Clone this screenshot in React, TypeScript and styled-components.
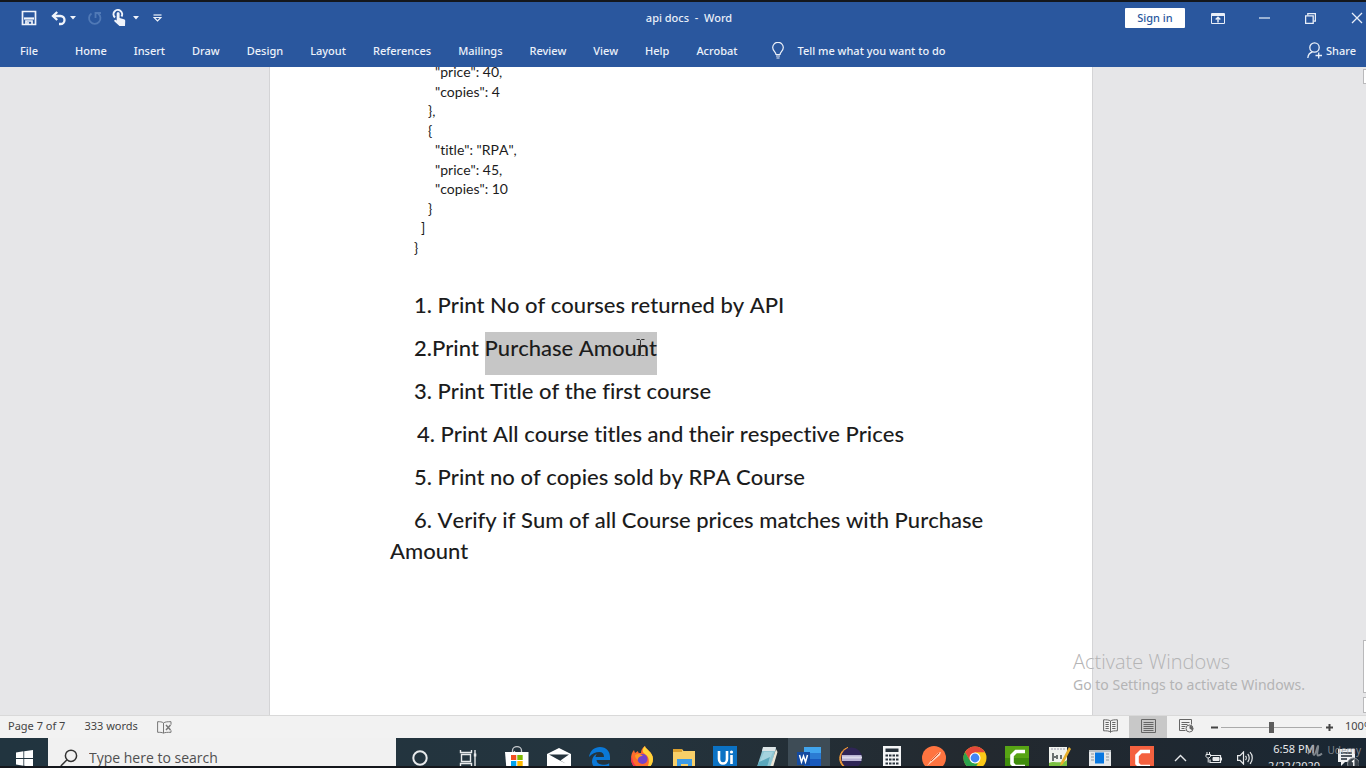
import React from "react";
import styled, { createGlobalStyle } from "styled-components";

const BLUE = "#2a579e";

const GlobalStyle = createGlobalStyle`
  * { box-sizing: border-box; }
  body { margin: 0; background: #14171c; font-family: "Noto Sans", "Open Sans", sans-serif; }
  button, input { font: inherit; }
  svg { display: block; flex: none; }
`;

const Screen = styled.div`
  display: flex;
  flex-direction: column;
  height: 100vh;
  overflow: hidden;
  padding: 2px 0;
  position: relative;
`;

const TitleBar = styled.header`
  display: grid;
  grid-template-columns: 1fr auto 1fr;
  align-items: center;
  height: 32px;
  flex: none;
  padding-left: 12px;
  background: ${BLUE};
  color: #e8eef8;
`;

const QuickAccess = styled.div`
  display: flex;
  align-items: center;
  padding-left: 4px;
`;

const ToolButton = styled.button<{ $w: number; $gap?: number; $dim?: boolean }>`
  display: flex;
  align-items: center;
  justify-content: center;
  width: ${(p) => p.$w}px;
  height: 24px;
  margin-left: ${(p) => p.$gap ?? 0}px;
  padding: 0;
  border: 0;
  background: none;
  color: ${(p) => (p.$dim ? "#5079b6" : "#f0f4fb")};
`;

const DocTitle = styled.h1`
  margin: 0;
  font-size: 11px;
  font-weight: 500;
  line-height: 16px;
  white-space: pre;
`;

const WindowControls = styled.div`
  display: flex;
  align-items: center;
  justify-content: flex-end;
`;

const SignIn = styled.button`
  width: 60px;
  height: 20px;
  margin-right: 10px;
  padding: 0;
  border: 0;
  border-radius: 1px;
  background: #fff;
  color: ${BLUE};
  font-size: 11px;
  font-weight: 500;
  line-height: 18px;
`;

const ControlButton = styled.button<{ $edge?: boolean }>`
  display: flex;
  align-items: center;
  justify-content: ${(p) => (p.$edge ? "flex-end" : "center")};
  width: ${(p) => (p.$edge ? 33 : 46)}px;
  height: 30px;
  padding: 0 ${(p) => (p.$edge ? 3 : 0)}px 0 0;
  border: 0;
  background: none;
  color: #e8eef8;
`;

const Ribbon = styled.nav`
  display: flex;
  align-items: center;
  height: 33px;
  flex: none;
  padding: 0 10px 0 6px;
  background: ${BLUE};
  color: #edf2fa;
  font-size: 11px;
`;

const Tab = styled.button<{ $file?: boolean }>`
  padding: 0 ${(p) => (p.$file ? 23 : 13)}px 0 14px;
  border: 0;
  background: none;
  color: inherit;
  line-height: 20px;
  font-weight: 500;
`;

const TellMe = styled.button`
  display: flex;
  align-items: center;
  gap: 13px;
  margin-left: 8px;
  padding: 0 14px;
  border: 0;
  background: none;
  color: inherit;
  font-weight: 500;
  line-height: 20px;
`;

const Share = styled(TellMe)`
  margin-left: auto;
  gap: 4px;
  padding: 0;
`;

const Workspace = styled.main`
  display: grid;
  grid-template-columns: 1fr 4px;
  flex: 1;
  min-height: 0;
  overflow: hidden;
  background: #e6e6e8;
`;

const Page = styled.article`
  width: 100%;
  max-width: 824px;
  margin: 0 auto;
  padding: 0 90px 0 120px;
  overflow: hidden;
  border: solid #d4d4d6;
  border-width: 0 1px;
  background: #fff;
  color: #1c1c1c;
  font-family: Lato, "Open Sans", sans-serif;
  font-variant-ligatures: none;
  font-kerning: none;
`;

const ScrollTrack = styled.div`
  display: flex;
  flex-direction: column;
  gap: 4px;
  padding: 2px 0 2px 1px;
`;

const ScrollPart = styled.span<{ $h: number; $push?: boolean }>`
  height: ${(p) => p.$h}px;
  margin-top: ${(p) => (p.$push ? "auto" : 0)};
  border: 1px solid #b9b9bb;
  border-right: 0;
  background: #fff;
`;

const Code = styled.div`
  margin: -5px 0 32px 24px;
  font-size: 14px;
`;

const CodeLine = styled.div<{ $level: number }>`
  padding-left: ${(p) => p.$level * 7}px;
  line-height: 20px;
  white-space: pre;
  &:nth-child(even) { line-height: 19px; }
`;

const Task = styled.p<{ $indent?: number }>`
  margin: 0;
  padding-bottom: 12px;
  font-size: 22px;
  font-weight: 500;
  line-height: 31px;
  text-indent: ${(p) => p.$indent ?? 24}px;
`;

const Selected = styled.mark`
  display: inline-block;
  position: relative;
  margin-bottom: -12px;
  padding-bottom: 12px;
  background: #c6c6c6;
  color: inherit;
  text-indent: 0;
`;

const TextCursor = styled.svg`
  position: absolute;
  right: 12px;
  top: 7px;
`;

const StatusBar = styled.footer`
  display: flex;
  align-items: center;
  flex: none;
  height: 23px;
  padding-left: 8px;
  overflow: hidden;
  border-top: 1px solid #d9d9d9;
  background: #f2f2f2;
  color: #444;
  font-size: 11px;
  line-height: 20px;
`;

const StatusText = styled.span`
  margin-right: 19px;
  padding-bottom: 2px;
  white-space: nowrap;
`;

const Views = styled.div`
  display: flex;
  align-items: center;
  align-self: stretch;
  margin-left: auto;
`;

const ViewButton = styled.button<{ $on?: boolean; $last?: boolean }>`
  display: flex;
  align-items: center;
  justify-content: center;
  align-self: stretch;
  width: 38px;
  margin-right: ${(p) => (p.$last ? 3 : 0)}px;
  padding: 0 0 2px;
  border: 0;
  background: ${(p) => (p.$on ? "#c8c8c8" : "none")};
  color: #666;
`;

const ZoomStep = styled.button`
  display: flex;
  align-items: center;
  justify-content: center;
  width: 12px;
  height: 20px;
  padding: 0;
  border: 0;
  background: none;
  color: #444;
`;

const ZoomRange = styled.input`
  width: 101px;
  height: 14px;
  margin: 0 1px;
  appearance: none;
  background: linear-gradient(#aaa, #aaa) center / 100% 1px no-repeat;
  &::-webkit-slider-thumb {
    appearance: none;
    width: 5px;
    height: 11px;
    background: #5c5c5c;
  }
`;

const ZoomValue = styled.span`
  width: 21px;
  margin-left: 10px;
  padding-bottom: 2px;
  overflow: hidden;
  white-space: nowrap;
`;

const TaskbarClip = styled.div`
  flex: none;
  height: 28px;
  overflow: hidden;
  background: linear-gradient(90deg, #21343f 0%, #24343e 45%, #23292f 72%, #1a2733 100%);
`;

const Taskbar = styled.div`
  display: flex;
  height: 40px;
`;

const TaskButton = styled.button<{ $active?: boolean; $grow?: boolean }>`
  display: flex;
  align-items: center;
  justify-content: center;
  flex: ${(p) => (p.$grow ? "1 1 0" : "0 0 48px")};
  min-width: 0;
  height: 40px;
  padding: 0;
  border: 0;
  background: ${(p) => (p.$active ? "#3e4c56" : "none")};
  color: #e8eaec;
`;

const Search = styled.label`
  display: flex;
  align-items: center;
  gap: 11px;
  width: 348px;
  padding-left: 12px;
  background: #f1f1f1;
  color: #444;
`;

const SearchInput = styled.input`
  flex: 1;
  min-width: 0;
  padding: 0;
  border: 0;
  outline: 0;
  background: none;
  font-family: "Open Sans", "Noto Sans", sans-serif;
  font-size: 14px;
  line-height: 20px;
  &::placeholder { color: #505050; opacity: 1; }
`;

const Apps = styled.div`
  display: flex;
  flex: 1;
  margin-left: 4px;
`;

const Tray = styled.div`
  display: flex;
  width: 203px;
  color: #e8eaec;
`;

const TrayButton = styled.button<{ $w: number }>`
  display: flex;
  align-items: center;
  justify-content: center;
  width: ${(p) => p.$w}px;
  height: 40px;
  padding: 0;
  border: 0;
  background: none;
  color: inherit;
`;

const Clock = styled.time`
  width: 66px;
  padding-top: 2px;
  text-align: center;
  font-size: 11px;
  line-height: 17px;
  white-space: nowrap;
`;

const Activation = styled.aside`
  position: absolute;
  right: 57px;
  bottom: 73px;
  width: 236px;
  color: #b4b4b5;
  font-size: 14px;
  line-height: 20px;
  white-space: nowrap;
  pointer-events: none;
`;

const ActivationTitle = styled.strong`
  display: block;
  font-family: "Open Sans", "Noto Sans", sans-serif;
  font-size: 20px;
  font-weight: 300;
  line-height: 26px;
`;

const Watermark = styled.div`
  position: absolute;
  right: 5px;
  bottom: 10px;
  display: flex;
  align-items: center;
  gap: 4px;
  color: #9a9fa4;
  font-size: 10px;
  line-height: 16px;
  opacity: 0.8;
  pointer-events: none;
`;

const Caret = () => (
  <svg width="6" height="4" viewBox="0 0 6 4"><path d="M0 0h6L3 3.5z" fill="currentColor" /></svg>
);

const SaveIcon = () => (
  <svg width="16" height="16" viewBox="0 0 16 16" fill="none" stroke="currentColor" strokeWidth="1.7">
    <path d="M1.500 1.500h13v13h-13z" /><path d="M3 8.500h10" strokeWidth="2.200" /><path d="M5 14v-3h6v3" /><path d="M7 12v3" />
  </svg>
);
const UndoIcon = () => (
  <svg width="16" height="15" viewBox="0 0 16 15" fill="none" stroke="currentColor" strokeWidth="2.300">
    <path d="M2 5h7.500a4 4 0 0 1 0 8H8" /><path d="M6.200 1 2 5l4.200 4" />
  </svg>
);
const RedoIcon = () => (
  <svg width="15" height="15" viewBox="0 0 15 15" fill="none" stroke="currentColor" strokeWidth="1.800">
    <path d="M4.500 2.500a5.700 5.700 0 1 0 6.500 0" /><path d="M8.500 7V2H14" />
  </svg>
);
const TouchIcon = () => (
  <svg width="16" height="18" viewBox="0 0 16 18">
    <path d="M3 8.500A4.300 4.300 0 1 1 9.500 7.500" fill="none" stroke="currentColor" strokeWidth="2" />
    <path d="M4.700 4.500c0-1.700 2.900-1.700 2.900 0V9l4.300 1.200c1 .3 1.500 1 1.300 2L13 17H7.500L2.500 12.500c-.8-1 .3-2 1.300-1.500l.9.500z" fill="currentColor" />
  </svg>
);
const CustomizeIcon = () => (
  <svg width="9" height="8" viewBox="0 0 9 8" fill="none" stroke="currentColor" strokeWidth="1.200">
    <path d="M.5 1h8" /><path d="M1 3.500h7L4.500 7z" />
  </svg>
);
const RibbonIcon = () => (
  <svg width="14" height="11" viewBox="0 0 14 11" fill="none" stroke="currentColor">
    <path d="M.5.5h13v10H.5z" /><path d="M.5 2h13" strokeWidth="2" /><path d="M7 9.500V4.500M4.700 6.500 7 4.300l2.300 2.200" strokeWidth="1.500" />
  </svg>
);
const RestoreIcon = () => (
  <svg width="11" height="11" viewBox="0 0 11 11" fill="none" stroke="currentColor" strokeWidth="1.300">
    <path d="M.6 2.800h7.600v7.500H.6z" /><path d="M2.800 2.500V.6h7.600v7.500H8.500" />
  </svg>
);
const BulbIcon = () => (
  <svg width="12" height="17" viewBox="0 0 12 17" fill="none" stroke="currentColor" strokeWidth="1.200">
    <path d="M4 12.500c0-2.500-3.300-3.500-3.300-6.900a5.300 5.300 0 0 1 10.600 0c0 3.400-3.300 4.400-3.300 6.900z" /><path d="M4 14h4M4.500 16h3" />
  </svg>
);
const PersonIcon = () => (
  <svg width="15" height="17" viewBox="0 0 15 17" fill="none" stroke="currentColor" strokeWidth="1.300">
    <circle cx="7.500" cy="5.500" r="4.700" /><path d="M.8 16c.3-3 2-5.300 4.500-6" /><path d="M8.500 13.500H15M11.700 10.500v6" />
  </svg>
);
const ProofIcon = () => (
  <svg width="15" height="13" viewBox="0 0 15 13" fill="none" stroke="#777">
    <path d="M6.500 12V2C5 .7 3 .7.600.7v10.600c2.400 0 4.400 0 5.900.9 1.500-.9 3.500-.9 7.500-.9v-2" /><path d="M6.500 2C8 .7 11 .7 14 .7v3" /><path d="m9 4 4.500 5M13.500 4 9 9" strokeWidth="1.500" />
  </svg>
);
const ReadIcon = () => (
  <svg width="15" height="14" viewBox="0 0 15 14" fill="none" stroke="currentColor">
    <path d="M7.500 13.500V2C6 .8 3.500.8.600.8v11c2.900 0 5.400 0 6.900 1.200 1.500-1.200 4-1.200 6.900-1.200v-11c-2.900 0-5.400 0-6.900 1.200" /><path d="M2.500 3.500h3.300M2.500 5.500h3.300M2.500 7.500h3.300M2.500 9.500h3.300M9.200 3.500h3.300M9.200 5.500h3.300M9.200 7.500h3.300M9.200 9.500h3.300" />
  </svg>
);
const PrintIcon = () => (
  <svg width="15" height="14" viewBox="0 0 15 14" fill="none" stroke="currentColor">
    <path d="M.5.5h14v13H.5z" /><path d="M2.500 3.500h10M2.500 5.500h10M2.500 7.500h10M2.500 9.500h10M2.500 11.500h10" />
  </svg>
);
const WebIcon = () => (
  <svg width="15" height="14" viewBox="0 0 15 14" fill="none" stroke="currentColor">
    <path d="M6.500 11.500h-6V.5h12v5" /><path d="M2.500 3.500h8M2.500 5.500h6M2.500 7.500h4M2.500 9.500h3" /><circle cx="10.500" cy="9.500" r="3.500" /><path d="M10.500 6.500v3l3 2a3.500 3.500 0 0 0 0-4z" fill="currentColor" stroke="none" />
  </svg>
);
const WindowsIcon = () => (
  <svg width="17" height="17" viewBox="0 0 17 17" fill="#fff">
    <path d="M0 2.400 7.400 1.300v6.800H0zM8.200 1.200 17 0v8.100H8.200zM0 8.900h7.400v6.800L0 14.600zM8.200 8.900H17V17l-8.800-1.200z" />
  </svg>
);
const SearchIcon = () => (
  <svg width="18" height="18" viewBox="0 0 18 18" fill="none" stroke="#333" strokeWidth="1.500">
    <circle cx="11" cy="6.800" r="5.600" /><path d="M7 10.800.8 17" />
  </svg>
);

const icons: Record<string, React.ReactNode> = {
  Cortana: <circle cx="12" cy="12" r="6.700" fill="none" stroke="currentColor" strokeWidth="2" />,
  "Task View": (
    <g fill="none" stroke="currentColor" strokeWidth="1.400">
      <path d="M5.500 8.500h9v7h-9zM4.500 4v2.500h11V4M4.500 20v-2.500h11V20M19 4v16" /><path d="M17.800 9h2.500" strokeWidth="3" />
    </g>
  ),
  "Microsoft Store": (
    <g>
      <path d="M7.500 7V4.500a4.500 3.800 0 0 1 9 0V7M9.500 7V5" fill="none" stroke="#c8ccd0" strokeWidth="1.300" /><path d="M0 6h23.500v18H1.500z" fill="#fff" />
      <path d="M6 9h5.300v5H6z" fill="#f25022" /><path d="M12.300 9h5.400v5h-5.400z" fill="#7fba00" /><path d="M6 15h5.300v5H6z" fill="#00a4ef" /><path d="M12.300 15h5.400v5h-5.400z" fill="#ffb900" />
    </g>
  ),
  Mail: <g><path d="M0 8 12 2l12 6v13H0z" fill="#fff" /><path d="M2 8.500h20l-8.500 6 6 3.500L10 13z" fill="#26343e" /></g>,
  Edge: <path d="M1 11C2 4.500 6.500 1 12 1c6.500 0 10 4.500 10 10v3H8.500c.3 3 3 4.800 6.500 4.800 2.500 0 4.500-.6 6.200-1.600v4.500C19 23 16.500 23.500 13.500 23.500 7.500 23.500 4 20 4 15.500c0-3.500 2-6.300 5-7.700-1 1-1.300 2.200-1.500 3.200H16c0-3.300-1.600-5-4.700-5C7.500 6 4 7.800 1 11z" fill="#0a78d7" />,
  Firefox: (
    <g>
      <path d="M1 13C1 9 2 6 4 4l1 3 3-2c0 2 1 2 3 2 0-3 1-5 4-7 0 3 8 6 8 13 0 6-5 11-11 11S1 19 1 13z" fill="#ff6b2c" />
      <path d="M15 0c0 3 8 6 8 13 0 5-3 9-7 10 4-5 4-12-1-15-3-2-3-5 0-8z" fill="#ffd43a" /><path d="M2 10c0 7 4 12 11 13-7 2-12-4-12-10z" fill="#f23052" /><circle cx="12.500" cy="13" r="5" fill="#7544c8" /><path d="M5 9c3-2 6-1 8 1-3 0-5 1-5 4-2-1-3-3-3-5z" fill="#ff9a24" />
    </g>
  ),
  "File Explorer": (
    <g><path d="M1 3h9l1.500 2H23v18H1z" fill="#f8cf68" /><path d="M1 3h9v3H1z" fill="#dca02f" /><path d="M5 13h15v11h-4v-6H9v6H5z" fill="#3c9be6" /></g>
  ),
  UiPath: (
    <g><path d="M0 0h24v24H0z" fill="#0b72c4" /><path d="M6 5v8c0 6 8 6 8 0V5M18.500 9v9" fill="none" stroke="#fff" strokeWidth="2.600" /><circle cx="18.500" cy="6" r="1.600" fill="#fff" /></g>
  ),
  Notepad: (
    <g><path d="M8 2h13l-5 19H2z" fill="#8fc6d3" /><path d="M8 1h13l-1 4H7z" fill="#dde5e7" /><path d="M21 3l1.500 3-5 17h-3z" fill="#ece7d8" /><path d="M9 6h9L14 15 4 18z" fill="#a5d3de" /><path d="M4 16l11-5-3 10H2z" fill="#5aa7bc" /></g>
  ),
  Word: (
    <g><path d="M7 1h17v6H7z" fill="#41a5ee" /><path d="M7 7h17v6H7z" fill="#2b7cd3" /><path d="M7 13h17v10H7z" fill="#185abd" /><path d="M0 6h13v13H0z" fill="#144aa0" /><path d="m2.500 9 2 7 2-6 2 6 2-7" fill="none" stroke="#fff" strokeWidth="1.500" /></g>
  ),
  Eclipse: (
    <g><path d="M10 1.500C-1 5-1 20 10 23 2 18 2 7 10 1.500z" fill="#f29b38" stroke="#f29b38" /><circle cx="13.500" cy="12" r="10.500" fill="#2f2556" /><path d="M4 9h19.500v6H4z" fill="#b9b3d3" /><path d="M4 11.500h20" stroke="#dcd9ea" strokeWidth="2" /></g>
  ),
  Calculator: (
    <g><path d="M3 0h18v24H3z" fill="#f4f5f6" /><path d="M5.500 2.500h13V6h-13z" fill="#27313a" /><path d="M5.500 9.500h13M5.500 13.500h13M5.500 17.500h13" stroke="#27313a" strokeWidth="2" strokeDasharray="2.500 1" /></g>
  ),
  Postman: (
    <g><circle cx="12" cy="12" r="12" fill="#ff7440" /><path d="m5 20 5-7 6-6 3-1-1 3-7 6z" fill="#ffd9c6" /><path d="m9 15 8-8" stroke="#d4552b" /></g>
  ),
  Chrome: (
    <g><circle cx="12" cy="12" r="11.500" fill="#fbc817" /><path d="M2 6.300A11.500 11.500 0 0 1 22 6.300H12L7 15z" fill="#e4483a" /><path d="M2 6.300 7.200 15l4.800 2.500h3L11 23.500A11.500 11.500 0 0 1 2 6.300z" fill="#2ba24c" /><circle cx="12" cy="12" r="5.500" fill="#fff" /><circle cx="12" cy="12" r="4.400" fill="#4285f4" /></g>
  ),
  Camtasia: (
    <g><path d="M0 0h24v24H0z" fill="#57a414" /><path d="M0 12h24v12H0z" fill="#3f8d0c" /><path d="M20 5.500h-9L7 9.500v8l3 3h10" fill="none" stroke="#fff" strokeWidth="3.600" /></g>
  ),
  "Notepad++": (
    <g><path d="M2 1h18v23H2z" fill="#f1f3ee" /><path d="M2 17c6-3 11 2 18-3v10H2z" fill="#7bc142" /><path d="M4 3h14" stroke="#99a" strokeDasharray="2 1" strokeWidth="1" /><path d="M6 7v8M6 11h5M10 9v4M14 9v4" stroke="#6b716f" strokeWidth="2" /><path d="m22 1 2 2-8 15-3 2 1-4z" fill="#e8b02c" /></g>
  ),
  Viewer: (
    <g><path d="M1 4h22v16H1z" fill="#e5e7e8" /><path d="M1 4h22v2H1z" fill="#b8bec2" /><path d="M7 6.500h9v11H7z" fill="#0877e0" /><path d="M3 8h3M3 11h3M3 14h3M18 8h3M18 11h3M18 14h3" stroke="#8b959c" /></g>
  ),
  Recorder: (
    <g><path d="M0 0h24v24H0z" fill="#f4613f" /><path d="M20 5.500h-9L7 9.500v8l3 3h10" fill="none" stroke="#fff" strokeWidth="3.600" /></g>
  ),
};

const AppIcon = ({ name }: { name: string }) => (
  <svg width="24" height="24" viewBox="0 0 24 24">{icons[name]}</svg>
);

const tabs = ["File", "Home", "Insert", "Draw", "Design", "Layout", "References", "Mailings", "Review", "View", "Help", "Acrobat"];
const apps = ["Microsoft Store", "Mail", "Edge", "Firefox", "File Explorer", "UiPath", "Notepad", "Word", "Eclipse", "Calculator", "Postman", "Chrome", "Camtasia", "Notepad++", "Viewer", "Recorder"];
const code: [number, string][] = [
  [3, '"price": 40,'],
  [3, '"copies": 4'],
  [2, "},"],
  [2, "{"],
  [3, '"title": "RPA",'],
  [3, '"price": 45,'],
  [3, '"copies": 10'],
  [2, "}"],
  [1, "]"],
  [0, "}"],
];

export default function App() {
  return (
    <Screen>
      <GlobalStyle />
      <TitleBar>
        <QuickAccess>
          <ToolButton $w={26} aria-label="Save"><SaveIcon /></ToolButton>
          <ToolButton $w={20} $gap={7} aria-label="Undo"><UndoIcon /></ToolButton>
          <ToolButton $w={8} aria-label="Undo history"><Caret /></ToolButton>
          <ToolButton $w={20} $gap={7} $dim aria-label="Redo"><RedoIcon /></ToolButton>
          <ToolButton $w={20} $gap={6} aria-label="Touch mode"><TouchIcon /></ToolButton>
          <ToolButton $w={10} $gap={1} aria-label="Touch mode options"><Caret /></ToolButton>
          <ToolButton $w={14} $gap={9} aria-label="Customize toolbar"><CustomizeIcon /></ToolButton>
        </QuickAccess>
        <DocTitle>{"api docs  -  Word"}</DocTitle>
        <WindowControls>
          <SignIn>Sign in</SignIn>
          <ControlButton aria-label="Ribbon display options"><RibbonIcon /></ControlButton>
          <ControlButton aria-label="Minimize">
            <svg width="11" height="2" viewBox="0 0 11 2"><path d="M0 1h11" stroke="currentColor" strokeWidth="1.200" /></svg>
          </ControlButton>
          <ControlButton aria-label="Restore"><RestoreIcon /></ControlButton>
          <ControlButton $edge aria-label="Close">
            <svg width="12" height="12" viewBox="0 0 12 12"><path d="m1 1 10 10M11 1 1 11" stroke="currentColor" strokeWidth="1.300" /></svg>
          </ControlButton>
        </WindowControls>
      </TitleBar>
      <Ribbon>
        {tabs.map((t) => <Tab key={t} $file={t === "File"}>{t}</Tab>)}
        <TellMe><BulbIcon />Tell me what you want to do</TellMe>
        <Share><PersonIcon />Share</Share>
      </Ribbon>
      <Workspace>
        <Page>
          <Code>
            {code.map(([level, text], i) => <CodeLine key={i} $level={level}>{text}</CodeLine>)}
          </Code>
          <Task>1. Print No of courses returned by API</Task>
          <Task>
            2.Print{" "}
            <Selected>
              Purchase Amount
              <TextCursor width="9" height="17" viewBox="0 0 9 17" fill="none" stroke="#333">
                <path d="M.5.5h3l1 1 1-1h3M4.500 1.500v14M.5 16.500h3l1-1 1 1h3" />
              </TextCursor>
            </Selected>
          </Task>
          <Task>3. Print Title of the first course</Task>
          <Task $indent={27}>4. Print All course titles and their respective Prices</Task>
          <Task>5. Print no of copies sold by RPA Course</Task>
          <Task>6. Verify if Sum of all Course prices matches with Purchase Amount</Task>
        </Page>
        <ScrollTrack>
          <ScrollPart $h={15} />
          <ScrollPart $h={53} $push />
          <ScrollPart $h={16} />
        </ScrollTrack>
      </Workspace>
      <StatusBar>
        <StatusText>Page 7 of 7</StatusText>
        <StatusText>333 words</StatusText>
        <ProofIcon />
        <Views>
          <ViewButton aria-label="Read mode"><ReadIcon /></ViewButton>
          <ViewButton $on aria-label="Print layout"><PrintIcon /></ViewButton>
          <ViewButton $last aria-label="Web layout"><WebIcon /></ViewButton>
          <ZoomStep aria-label="Zoom out">
            <svg width="7" height="7" viewBox="0 0 7 7"><path d="M0 3.500h7" stroke="currentColor" strokeWidth="2" /></svg>
          </ZoomStep>
          <ZoomRange type="range" aria-label="Zoom" defaultValue={50} />
          <ZoomStep aria-label="Zoom in">
            <svg width="7" height="7" viewBox="0 0 7 7"><path d="M0 3.500h7M3.500 0v7" stroke="currentColor" strokeWidth="2" /></svg>
          </ZoomStep>
          <ZoomValue>100%</ZoomValue>
        </Views>
      </StatusBar>
      <TaskbarClip>
        <Taskbar>
          <TaskButton aria-label="Start"><WindowsIcon /></TaskButton>
          <Search>
            <SearchIcon />
            <SearchInput type="text" placeholder="Type here to search" aria-label="Type here to search" />
          </Search>
          <TaskButton aria-label="Cortana"><AppIcon name="Cortana" /></TaskButton>
          <TaskButton aria-label="Task View"><AppIcon name="Task View" /></TaskButton>
          <Apps>
            {apps.map((a) => (
              <TaskButton key={a} $grow $active={a === "Word"} aria-label={a}><AppIcon name={a} /></TaskButton>
            ))}
          </Apps>
          <Tray>
            <TrayButton $w={34} aria-label="Show hidden icons">
              <svg width="13" height="8" viewBox="0 0 13 8"><path d="m1 7 5.500-5.500L12 7" fill="none" stroke="currentColor" strokeWidth="1.400" /></svg>
            </TrayButton>
            <TrayButton $w={32} aria-label="Battery">
              <svg width="17" height="12" viewBox="0 0 17 12" fill="none" stroke="currentColor">
                <path d="M6 3.500h9.500v7H5v-3" strokeWidth="1.200" /><path d="M8 5.500h6v3H8z" fill="currentColor" /><path d="M16.500 5.500v3M2 0v2M4.500 0v2M1 2.500h4.500v2L4 6H2.500L1 4.500zM3.200 6v4.500" />
              </svg>
            </TrayButton>
            <TrayButton $w={32} aria-label="Volume">
              <svg width="16" height="14" viewBox="0 0 16 14" fill="none" stroke="currentColor" strokeWidth="1.200">
                <path d="M.6 4.700H3L6.500 1v12L3 9.300H.6z" /><path d="M8.500 5c1 1 1 3 0 4M10.700 3c2 2 2 6 0 8M13 1.200c3 3 3 8.600 0 11.600" />
              </svg>
            </TrayButton>
            <Clock>6:58 PM<br />2/22/2020</Clock>
            <TrayButton $w={39} aria-label="Notifications">
              <svg width="24" height="24" viewBox="0 0 24 24">
                <path d="M3 3h17v13H10l-4 4v-4H3z" fill="#f0f1f2" /><path d="M6 7h11M6 10h11M6 13h6" stroke="#1d2933" strokeWidth="1.300" /><circle cx="18.500" cy="18" r="6" fill="#39424a" stroke="#8b9197" /><path d="m17 16 1.800-1.500V21" fill="none" stroke="#fff" strokeWidth="1.300" />
              </svg>
            </TrayButton>
          </Tray>
        </Taskbar>
      </TaskbarClip>
      <Activation>
        <ActivationTitle>Activate Windows</ActivationTitle>
        Go to Settings to activate Windows.
      </Activation>
      <Watermark>
        <svg width="16" height="13" viewBox="0 0 16 13" fill="none" stroke="currentColor" strokeWidth="1.800">
          <path d="M1 10C3 6 5 2 6 1.500S5 11 7 11s3-9 4-9-2 9.500 0 9.500 3-1 4-2" />
        </svg>
        Udemy
      </Watermark>
    </Screen>
  );
}
